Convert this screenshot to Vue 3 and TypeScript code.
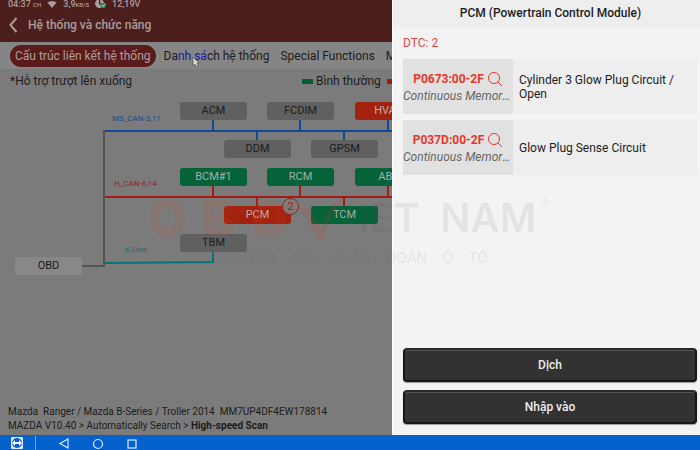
<script setup lang="ts">
type Status = 'idle' | 'ok' | 'fault' | 'root'

interface EcuNode {
  name: string
  x: number
  y: number
  status: Status
  faults?: number
}

interface TroubleCode {
  code: string
  state: string
  description: string
}

const nodes: EcuNode[] = [
  { name: 'ACM', x: 180, y: 8, status: 'idle' },
  { name: 'FCDIM', x: 267, y: 8, status: 'idle' },
  { name: 'HVAC', x: 355, y: 8, status: 'fault' },
  { name: 'DDM', x: 224, y: 46, status: 'idle' },
  { name: 'GPSM', x: 311, y: 46, status: 'idle' },
  { name: 'BCM#1', x: 180, y: 74, status: 'ok' },
  { name: 'RCM', x: 267, y: 74, status: 'ok' },
  { name: 'ABS', x: 355, y: 74, status: 'ok' },
  { name: 'PCM', x: 224, y: 112, status: 'fault', faults: 2 },
  { name: 'TCM', x: 311, y: 112, status: 'ok' },
  { name: 'TBM', x: 180, y: 140, status: 'idle' },
  { name: 'OBD', x: 15, y: 163, status: 'root' },
]

const codes: TroubleCode[] = [
  { code: 'P0673:00-2F', state: 'Continuous Memory DTC', description: 'Cylinder 3 Glow Plug Circuit / Open' },
  { code: 'P037D:00-2F', state: 'Continuous Memory DTC', description: 'Glow Plug Sense Circuit' },
]

const tagline = 'CHUYÊN GIA CHẨN ĐOÁN Ô TÔ'.split(' ')
</script>

<template>
  <div class="screen">
    <div class="workspace">
      <main class="topology">
        <header class="app-bar">
          <div class="status">
            <span>04:37 <small>CH</small></span>
            <svg class="wifi" viewBox="0 0 12 9" aria-hidden="true">
              <path d="M0 2Q6-2 12 2L6 9Z" fill="currentColor" />
            </svg>
            <span>3,9<small>KB/S</small></span>
            <svg class="gauge" viewBox="0 0 12 10" aria-hidden="true">
              <circle cx="5" cy="4" r="5" fill="#aaa09f" />
              <path d="M5 0v4l3 2" fill="none" stroke="#4c201d" stroke-width="1.5" />
              <circle cx="9" cy="6" r="3" fill="#27865a" />
              <path d="M7 6l2 1 2-3" fill="none" stroke="#c5d1c9" />
            </svg>
            <span>12,19V</span>
          </div>
          <div class="heading">
            <button class="back" type="button" aria-label="Quay lại">
              <svg viewBox="0 0 10 16"><path d="M8 1L2 8l6 7" fill="none" stroke="currentColor" stroke-width="2" /></svg>
            </button>
            <h1>Hệ thống và chức năng</h1>
          </div>
        </header>

        <nav class="tabs">
          <button class="tab active" type="button">Cấu trúc liên kết hệ thống</button>
          <button class="tab" type="button">
            Da<span class="marked">nh sá</span>ch hệ thống
            <svg class="pointer" viewBox="0 0 8 12" aria-hidden="true">
              <path d="M1 1v9l2-2 1 3 2-1-1-3h2Z" fill="#d8d8d8" stroke="#444" stroke-width=".6" />
            </svg>
          </button>
          <button class="tab" type="button">Special Functions</button>
          <button class="tab" type="button">Module</button>
        </nav>

        <div class="legend">
          <span>*Hỗ trợ trượt lên xuống</span>
          <span class="key"><i class="swatch ok"></i>Bình thường</span>
          <span class="key"><i class="swatch fault"></i>Lỗi</span>
        </div>

        <section class="diagram">
          <svg class="wires" viewBox="0 0 440 190" width="440" height="190" aria-hidden="true">
            <g fill="none" stroke-width="2">
              <path d="M82 172H104V36" stroke="#545454" />
              <path d="M105 37H440M213 25V37M300 25V37M388 25V37M257 37V46M344 37V46" stroke="#0f4a96" />
              <path d="M105 103H440M213 91V103M300 91V103M388 91V103M257 103V112M344 103V112" stroke="#a51a12" />
              <path d="M105 169L213 168V157" stroke="#06727c" />
            </g>
            <g class="bus-names">
              <text x="112" y="27" fill="#1d4a8c">MS_CAN-3,11</text>
              <text x="114" y="92" fill="#981d20">H_CAN-6,14</text>
              <text x="125" y="158" fill="#106f79">K-Line</text>
            </g>
          </svg>
          <button
            v-for="node in nodes"
            :key="node.name"
            type="button"
            class="node"
            :class="node.status"
            :style="{ left: node.x + 'px', top: node.y + 'px' }"
          >
            {{ node.name }}
            <span v-if="node.faults" class="badge">{{ node.faults }}</span>
          </button>
        </section>

        <footer class="vehicle">
          <p>Mazda&nbsp; Ranger / Mazda B-Series / Troller 2014&nbsp; MM7UP4DF4EW178814</p>
          <p>MAZDA V10.40 &gt; Automatically Search &gt; <b>High-speed Scan</b></p>
        </footer>
      </main>

      <aside class="panel">
        <h2>PCM (Powertrain Control Module)</h2>
        <div class="panel-body">
          <p class="count">DTC: {{ codes.length }}</p>
          <ul class="codes">
            <li v-for="item in codes" :key="item.code">
              <div class="code-cell">
                <button class="code" type="button">
                  {{ item.code }}
                  <svg viewBox="0 0 16 16" aria-hidden="true">
                    <circle cx="7" cy="7" r="5.5" fill="none" stroke="currentColor" />
                    <path d="M11 11l4 4" stroke="currentColor" />
                  </svg>
                </button>
                <em>{{ item.state }}</em>
              </div>
              <p class="description">{{ item.description }}</p>
            </li>
          </ul>
          <div class="actions">
            <button type="button">Dịch</button>
            <button type="button">Nhập vào</button>
          </div>
        </div>
      </aside>
    </div>

    <div class="watermark">
      <div class="brand">
        <b>O</b><b>B</b><b>D</b>
        <svg viewBox="0 0 48 50" aria-hidden="true">
          <path d="M2 15h10l12 22Q28 8 48 4 32 17 25 47h-4Z" fill="currentColor" />
        </svg>
        <span>IET</span><span>NAM</span><sup>®</sup>
      </div>
      <p><span v-for="word in tagline" :key="word">{{ word }}</span></p>
    </div>

    <nav class="system-bar">
      <button class="remote" type="button" aria-label="TeamViewer">
        <svg viewBox="0 0 14 14">
          <rect x="1" y="1" width="12" height="12" rx="1" fill="#e2edfb" />
          <circle cx="7" cy="7" r="5" fill="#0b5cc4" />
          <path d="M2 7l3-3v2h4V4l3 3-3 3V8H5v2Z" fill="#fff" />
        </svg>
      </button>
      <button type="button" aria-label="Back">
        <svg viewBox="0 0 12 12"><path d="M10 2v9L2 6.500Z" fill="none" stroke="currentColor" stroke-width="1.200" /></svg>
      </button>
      <button type="button" aria-label="Home">
        <svg viewBox="0 0 12 12"><circle cx="6" cy="7" r="4.500" fill="none" stroke="currentColor" stroke-width="1.200" /></svg>
      </button>
      <button type="button" aria-label="Recent">
        <svg viewBox="0 0 12 12"><rect x="2" y="3" width="8" height="8" fill="none" stroke="currentColor" stroke-width="1.200" /></svg>
      </button>
    </nav>
  </div>
</template>

<style>
body {
  margin: 0;
}
</style>

<style scoped>
* {
  box-sizing: border-box;
}
.screen {
  position: relative;
  display: flex;
  flex-direction: column;
  min-height: 100vh;
  overflow: hidden;
  font-family: Roboto, 'Noto Sans', sans-serif;
  color: #1c1c1c;
}
button {
  padding: 0;
  border: 0;
  background: none;
  font: inherit;
  color: inherit;
  white-space: nowrap;
}
h1,
h2,
p,
ul {
  margin: 0;
  padding: 0;
}
.workspace {
  flex: 1;
  display: grid;
  grid-template-columns: 56fr 44fr;
}
.topology {
  display: flex;
  flex-direction: column;
  min-width: 0;
  overflow: hidden;
  background: #7b7b7b;
}
.app-bar {
  height: 42px;
  overflow: hidden;
  background: #4d1f1c;
  color: #a89d9c;
}
.status {
  display: flex;
  align-items: center;
  gap: 6px;
  height: 8px;
  padding-left: 8px;
  font-size: 9px;
  line-height: 8px;
  font-weight: 500;
}
.status small {
  font-size: 6px;
}
.wifi {
  width: 10px;
  height: 7px;
}
.gauge {
  width: 11px;
  height: 9px;
}
.heading {
  display: flex;
  align-items: center;
  gap: 9px;
  height: 33px;
  padding-left: 8px;
}
.back {
  display: flex;
}
.back svg {
  width: 11px;
  height: 16px;
}
h1 {
  font-size: 12px;
  font-weight: 500;
}
.tabs {
  display: flex;
  align-items: center;
  gap: 11px;
  height: 27px;
  padding-left: 10px;
  background: #858585;
}
.tab {
  position: relative;
  flex: none;
  font-size: 12px;
  line-height: 22px;
}
.tab.active {
  padding: 0 5px;
  margin-right: -3px;
  border-radius: 11px;
  background: #5b1b1a;
  color: #aaa19f;
}
.marked {
  color: #1717b0;
}
.pointer {
  position: absolute;
  left: 28px;
  top: 11px;
  width: 8px;
  height: 12px;
}
.legend {
  display: flex;
  gap: 6px;
  height: 25px;
  padding-left: 10px;
  font-size: 12px;
  line-height: 25px;
  white-space: nowrap;
}
.legend > span {
  flex: none;
}
.legend > span:first-child {
  width: 286px;
}
.key {
  display: flex;
  align-items: center;
  gap: 3px;
}
.swatch {
  width: 11px;
  height: 5px;
}
.swatch.ok {
  background: #075b36;
}
.swatch.fault {
  background: #a11b0c;
}
.diagram {
  position: relative;
  flex: 1;
  min-height: 190px;
}
.wires {
  display: block;
}
.bus-names {
  font-size: 8px;
}
.node {
  position: absolute;
  width: 67px;
  height: 18px;
  border-radius: 3px;
  font-size: 11px;
  line-height: 18px;
  text-align: center;
}
.node.idle {
  background: #606061;
}
.node.ok {
  background: #066239;
  color: #a3b0aa;
}
.node.fault {
  background: #a3220e;
  color: #bfaca7;
}
.node.root {
  background: #888;
}
.badge {
  position: absolute;
  top: -8px;
  right: -8px;
  width: 17px;
  height: 17px;
  border: 1px solid #9c2219;
  border-radius: 50%;
  background: #837a78;
  color: #9c2219;
  line-height: 15px;
}
.vehicle {
  padding: 0 8px 2px;
  font-size: 10px;
  line-height: 14px;
  white-space: nowrap;
}
.panel {
  display: flex;
  flex-direction: column;
  min-width: 0;
  border-left: 1px solid #fff;
  background: #f4f3f3;
}
h2 {
  height: 28px;
  padding-left: 8px;
  background: #eee;
  font-size: 12px;
  line-height: 27px;
  font-weight: 500;
  text-align: center;
}
.panel-body {
  flex: 1;
  display: flex;
  flex-direction: column;
  padding: 0 3px 11px 10px;
}
.count {
  font-size: 12px;
  line-height: 31px;
  color: #db4a47;
}
.codes {
  display: grid;
  gap: 6px;
  list-style: none;
}
.codes li {
  display: grid;
  grid-template-columns: 110px 1fr;
  align-items: center;
  height: 55px;
  background: #eee;
}
.code-cell {
  display: flex;
  flex-direction: column;
  justify-content: center;
  height: 100%;
  min-width: 0;
  background: #e1e1e1;
}
.code {
  display: flex;
  align-items: center;
  justify-content: center;
  gap: 3px;
  font-size: 12px;
  line-height: 18px;
  font-weight: 700;
  color: #e5382b;
}
.code svg {
  width: 16px;
  height: 16px;
}
.code-cell em {
  overflow: hidden;
  padding-right: 2px;
  font-size: 12px;
  line-height: 16px;
  color: #666;
  text-overflow: ellipsis;
  white-space: nowrap;
}
.description {
  padding-left: 6px;
  font-size: 12px;
  line-height: 14px;
}
.actions {
  display: grid;
  gap: 8px;
  margin-top: auto;
}
.actions button {
  height: 34px;
  border: 2px solid #171717;
  border-top-color: #292929;
  border-radius: 4px;
  background: #333132;
  box-shadow: inset 0 1px #555, 0 1px 1px #999;
  font-size: 12px;
  font-weight: 500;
  color: #ededed;
}
.watermark {
  position: absolute;
  left: 148px;
  top: 185px;
  pointer-events: none;
}
.brand {
  display: grid;
  grid-template-columns: 54px 50px 46px 60px 82px 100px 16px;
  align-items: center;
  height: 65px;
  font-family: Inter, sans-serif;
  font-size: 40px;
  color: rgba(80, 80, 80, .09);
}
.brand b {
  font-size: 50px;
  font-weight: 900;
  color: rgba(210, 65, 30, .12);
}
.brand svg {
  width: 48px;
  height: 50px;
  color: rgba(210, 50, 25, .14);
}
.brand span {
  font-weight: 600;
}
.brand sup {
  align-self: start;
  font-size: 13px;
  line-height: 36px;
}
.watermark p {
  display: flex;
  justify-content: space-between;
  width: 272px;
  margin-left: 68px;
  font-family: Inter, sans-serif;
  font-size: 14px;
  line-height: 16px;
  color: rgba(80, 80, 80, .11);
  white-space: nowrap;
}
.system-bar {
  display: flex;
  align-items: center;
  gap: 22px;
  height: 15px;
  padding-left: 10px;
  overflow: hidden;
  background: #0561cc;
  color: #dceafc;
}
.system-bar button {
  display: flex;
}
.system-bar svg {
  width: 12px;
  height: 14px;
}
.system-bar .remote {
  padding-right: 11px;
  border-right: 1px solid #6ba3e5;
}
.system-bar .remote svg {
  width: 14px;
}
</style>
